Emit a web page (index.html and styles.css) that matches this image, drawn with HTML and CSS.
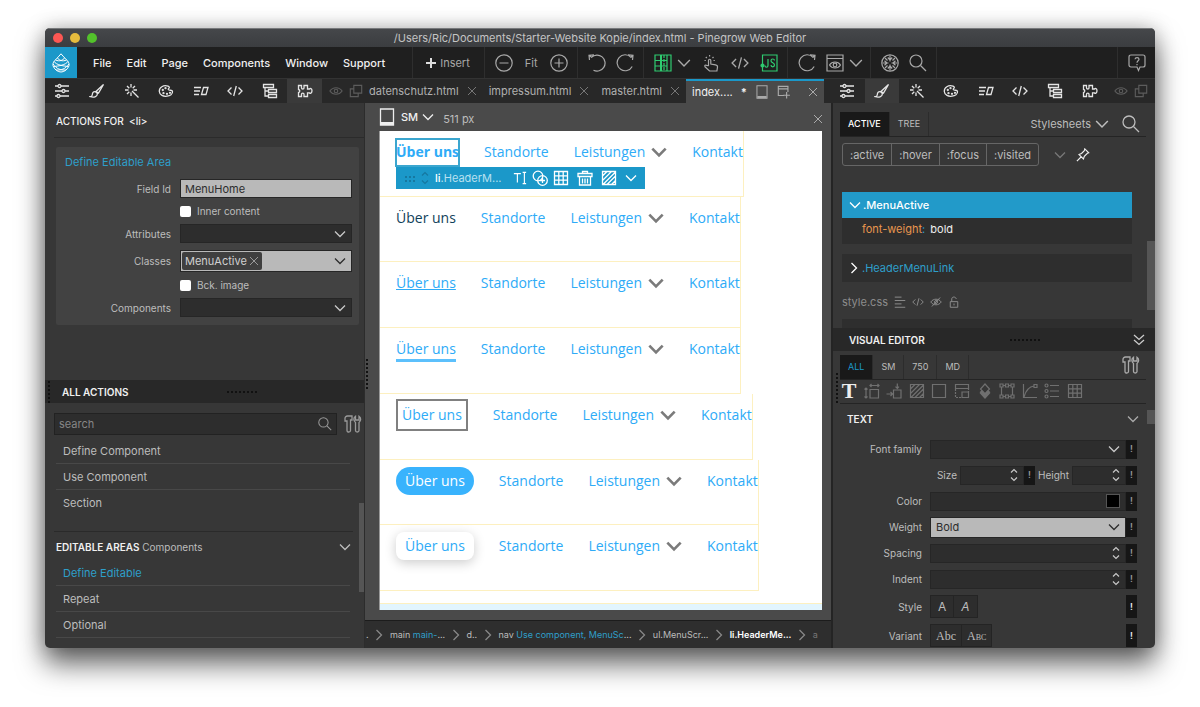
FILE: index.html
```html
<!DOCTYPE html>
<html lang="en">
<head>
  <meta charset="UTF-8">
  <meta name="viewport" content="width=device-width, initial-scale=1.0">
  <title>Pinegrow Web Editor</title>
  <link rel="stylesheet" href="styles.css">
</head>
<body>
  <!-- icon set -->
  <svg class="sprite" aria-hidden="true">
    <symbol id="chev" viewBox="0 0 12 12"><path d="M1 3.500l5 5 5-5"/></symbol>
    <symbol id="chev-right" viewBox="0 0 12 12"><path d="M3.500 1l5 5-5 5"/></symbol>
    <symbol id="chev-double" viewBox="0 0 12 12"><path d="M1 1l5 4.500L11 1M1 6l5 4.500L11 6"/></symbol>
    <symbol id="spin" viewBox="0 0 8 14"><path d="M1 4.500l3-3 3 3M1 9.500l3 3 3-3"/></symbol>
    <symbol id="close" viewBox="0 0 10 10"><path d="M1 1l8 8M9 1l-8 8"/></symbol>
    <symbol id="logo" viewBox="0 0 20 20"><path d="M10 .8c2.500 3.200 5.600 5.600 7.400 8.400.9 1.500 1 3.200.1 4.600-1.400 3-4.500 5.200-7.500 5.200s-6.100-2.200-7.500-5.200c-.9-1.400-.8-3.100.1-4.600C4.400 6.400 7.500 4 10 .8zM6.500 5c1.500 2.300 5 3.800 9 2M13.500 5c-1.500 2.300-5 3.800-9 2M3 8.500c2.500 3.500 9 4.500 14.500 5M17 8.500c-2.500 3.500-9 4.500-14.500 5M2.200 11c3 5 8 6.500 12.800 6M17.800 11c-3 5-8 6.500-12.800 6"/></symbol>
    <symbol id="sliders" viewBox="0 0 16 16"><path d="M1 3h3M7 3h8M1 8h7M11 8h4M1 13h2M6 13h9"/><circle cx="5.500" cy="3" r="1.500"/><circle cx="9.500" cy="8" r="1.500"/><circle cx="4.500" cy="13" r="1.500"/></symbol>
    <symbol id="brush" viewBox="0 0 16 16"><path d="M14.500 1.500L9.500 10 7 8.500zM6.500 8.700c-2.500-.5-3 1.500-3.200 3-.1 1-.8 1.800-1.800 2 3 1 6.800.3 7-3.200z"/></symbol>
    <symbol id="wand" viewBox="0 0 16 16"><path d="M8 8l6.500 6.500M7 1v3.500M7 9.500V13M1 7h3.500M9.500 7H13M3 3l2.300 2.300M11 3L8.700 5.300M3 11l2.300-2.300"/></symbol>
    <symbol id="palette" viewBox="0 0 16 16"><path d="M10 3.200C5.500 1.600 1 4.500 1.300 8.500c.3 3.600 4.200 5.300 7.700 4.700 3-.4 5.800-2.200 5.500-4.800-.2-1.500-1.700-1-3-1.200-1.500-.2-1.700-1.200-.6-2 .8-.5.500-1.500-.9-2z"/><circle cx="4.800" cy="7" r=".5"/><circle cx="7.500" cy="5.200" r=".5"/><circle cx="5.500" cy="10.200" r=".5"/><circle cx="9" cy="10.800" r=".5"/><circle cx="12" cy="9.800" r=".5"/></symbol>
    <symbol id="text-skew" viewBox="0 0 16 16"><path d="M1 4.500h7M1 8h6M1 11.500h5M10.500 4.500H15l-2 7H8.500z"/></symbol>
    <symbol id="code" viewBox="0 0 16 16"><path d="M4.500 4.500L1 8l3.500 3.500M11.500 4.500L15 8l-3.500 3.500M9.300 3L6.700 13"/></symbol>
    <symbol id="tree" viewBox="0 0 16 16"><path d="M1.500 1.500h10v3h-10zM6.500 6.500h8v3h-8zM6.500 11.500h8v3h-8zM3 4.500V13h3.500M3 8h3.500"/></symbol>
    <symbol id="puzzle" viewBox="0 0 16 16"><path d="M1.500 2.500h3V5c0 1.300 2.500 1.300 2.500 0V2.500h3.500V6h2c.6-1 2.500-.6 2.500 1.800s-1.900 3-2.500 2h-2v3.700H7V11c0-1.300-2.500-1.300-2.500 0v2.500h-3V9.500C3.200 9.500 3.200 6.500 1.500 6.500z"/></symbol>
    <symbol id="eye" viewBox="0 0 16 16"><path d="M1 8c3.500-5 10.500-5 14 0-3.500 5-10.500 5-14 0z"/><circle cx="8" cy="8" r="2"/></symbol>
    <symbol id="eye-off" viewBox="0 0 16 16"><path d="M1 8c3.500-5 10.500-5 14 0-3.500 5-10.500 5-14 0zM2.500 14L13.500 2"/><circle cx="8" cy="8" r="2"/></symbol>
    <symbol id="layers" viewBox="0 0 16 16"><path d="M5.500 1.500h9v9h-9zM5.500 5.500h-4v9h9v-4"/></symbol>
    <symbol id="plus" viewBox="0 0 12 12"><path d="M6 1v10M1 6h10"/></symbol>
    <symbol id="zoom-out" viewBox="0 0 18 18"><circle cx="9" cy="9" r="8.200"/><path d="M4.500 9h9"/></symbol>
    <symbol id="zoom-in" viewBox="0 0 18 18"><circle cx="9" cy="9" r="8.200"/><path d="M4.500 9h9M9 4.500v9"/></symbol>
    <symbol id="undo" viewBox="0 0 18 18"><path d="M6 .8L1 1.200 1.500 6M1.500 1.500L3.500 3.300A8 8 0 1 1 5.500 16.200"/></symbol>
    <symbol id="redo" viewBox="0 0 18 18"><path d="M12 .8l5 .4-.5 4.800M16.500 1.500L15 3.300A8 8 0 1 0 16.200 12.500"/></symbol>
    <symbol id="layout" viewBox="0 0 18 18"><path d="M1 1h16v16H1zM13 1v16M1 6.500h12M1 12h12"/><path d="M7 1v16" stroke-width="2"/><path d="M10 1v16" stroke-dasharray="3 1"/></symbol>
    <symbol id="hand" viewBox="0 0 18 18"><path d="M6.500 11.500V6.500c0-1.700 2.300-1.700 2.300 0V10l4.700.8c1.500.3 2.200 1 2 2.400l-.6 3.800H7.500L3 12.800c-.8-1.300.5-2.200 1.500-1.500zM2.500 6.500h1.300M11.500 6.500h1.300M3.800 3l1 1M11.500 3l-1 1M7.600 1v1.400"/></symbol>
    <symbol id="js" viewBox="0 0 18 18"><path d="M2.500 1H17v16H2.500zM8 5v6.500c0 2.300-3 2.300-3 0M14.500 6.500c0-2-3.500-2-3.500.2 0 2.300 3.500 2 3.500 4.400 0 2.300-3.500 2.300-3.500 0"/><circle cx="2.500" cy="11.500" r="1.500" fill="currentColor"/></symbol>
    <symbol id="browser" viewBox="0 0 18 18"><path d="M1 1h16v16H1zM1 4.500h16M3.500 11c2.500-4 8.500-4 11 0-2.500 4-8.500 4-11 0z"/><circle cx="9" cy="11" r="1.800"/></symbol>
    <symbol id="wheel" viewBox="0 0 18 18"><circle cx="9" cy="9" r="8.200"/><path d="M9 7.500V1.500M6.800 3.500L9 6l2.200-2.500M9 10.500v6M6.800 14.500L9 12l2.200 2.500M7.500 9h-6M3.500 6.800L6 9l-2.500 2.200M10.500 9h6M14.500 6.800L12 9l2.500 2.200M4 4l2.500 2.500M14 4l-2.500 2.500M4 14l2.500-2.500M14 14l-2.500-2.500"/></symbol>
    <symbol id="search" viewBox="0 0 18 18"><circle cx="7" cy="7" r="6"/><path d="M11.500 11.500L17 17"/></symbol>
    <symbol id="help" viewBox="0 0 18 18"><path d="M3 1h12c1.300 0 2 .8 2 2v8c0 1.300-.8 2-2 2h-3l-1.500 3.500L9 13H3c-1.300 0-2-.8-2-2V3c0-1.300.8-2 2-2zM7 5.200c.2-2.200 4-2.200 4 0C11 6.800 9 6.800 9 8.700M9 10v1.200"/></symbol>
    <symbol id="tablet" viewBox="0 0 16 18"><path d="M1.500 1h13v16h-13z"/><path d="M2 15.500h12" stroke-width="3"/></symbol>
    <symbol id="page-plus" viewBox="0 0 16 16"><path d="M8 12H1.500V1.500h11V8M1.500 4.500h11M11 8v7.500M7.200 11.700h7.600"/></symbol>
    <symbol id="tools" viewBox="0 0 18 18"><path d="M1 6V3.500C1 2 2 1 3.500 1H8v4H6.500v10.500c0 2-3.500 2-3.500 0V6zM11.500 1.200c-2.200 1.500-2.200 4.800 0 6.300v8c0 2 3.500 2 3.500 0v-8c2.200-1.500 2.200-4.800 0-6.300V5h-3.500z"/></symbol>
    <symbol id="text-cursor" viewBox="0 0 16 16"><path d="M1 3h8M5 3v10M11 1.500h4M11 14.500h4M13 1.500v13"/></symbol>
    <symbol id="duplicate" viewBox="0 0 16 16"><circle cx="6" cy="6" r="4.800"/><circle cx="10.500" cy="10.500" r="4.800"/><path d="M10.500 8v5M8 10.500h5"/></symbol>
    <symbol id="grid" viewBox="0 0 16 16"><path d="M1.500 1.500h13v13h-13zM5.800 1.500v13M10.200 1.500v13M1.500 5.800h13M1.500 10.200h13"/></symbol>
    <symbol id="trash" viewBox="0 0 16 16"><path d="M1 3.500h14v3H1zM5.500 3.500v-2h5v2M2.500 6.500V15h11V6.500M5.500 8.500v5M8 8.500v5M10.500 8.500v5"/></symbol>
    <symbol id="hatch" viewBox="0 0 16 16"><path d="M1.500 1.500h13v13h-13zM1.500 6L6 1.500M1.500 10.500l9-9M2 14.500l12.500-12.500M6 14.500l8.500-8.500M10.500 14.500l4-4"/></symbol>
    <symbol id="pin" viewBox="0 0 16 16"><path d="M1 15l5-5M3.500 7.500l5 5 1-3 3.500-3.500 1.500-.5L10 1 9.500 3 6.300 6.300z"/></symbol>
    <symbol id="lines" viewBox="0 0 16 16"><path d="M1 1.500h9M1 6h14M1 10.500h9M1 15h14"/></symbol>
    <symbol id="lock" viewBox="0 0 16 16"><path d="M3 7.500h10V15H3zM5 7.500V4c0-3.500 5.500-3.500 6 0M8 10v2.500"/></symbol>
    <symbol id="size" viewBox="0 0 16 16"><path d="M6 6.500h8.500v8.500H6zM2 5v10M.5 6.500L2 5l1.500 1.500M.5 13.500L2 15l1.500-1.500M6 2.500h9M7.500 1L6 2.500 7.500 4M13.500 1L15 2.500 13.500 4"/></symbol>
    <symbol id="margin" viewBox="0 0 16 16"><path d="M7.500 7h7.500v8H7.500zM.5 11h6M4.500 9l2 2-2 2M11.300.5v5M9.500 3.700l1.800 1.800L13 3.700"/></symbol>
    <symbol id="box" viewBox="0 0 16 16"><path d="M1.500 1.500h13v13h-13z"/></symbol>
    <symbol id="position" viewBox="0 0 16 16"><path d="M1.500 1.500h13v4h-13zM8 9h6.500v5.500H8z"/><path d="M1.500 6v8.500H8M14.500 5v4" stroke-dasharray="2 1"/></symbol>
    <symbol id="effects" viewBox="0 0 16 16"><path d="M8 1l4.500 5L8 11 3.500 6zM3 9.500l5 5.500 5-5.500"/><path d="M3.500 9L8 14l4.500-5L11 8l-3 3-3-3z" fill="currentColor"/></symbol>
    <symbol id="transform" viewBox="0 0 16 16"><path d="M1 1h3v3H1zM6.500 1h3v3h-3zM12 1h3v3h-3zM1 12h3v3H1zM6.500 12h3v3h-3zM12 12h3v3h-3zM2.500 4v8M13.500 4v8M4 2.500h2.500M9.500 2.500H12M4 13.500h2.500M9.500 13.500H12"/></symbol>
    <symbol id="curve" viewBox="0 0 16 16"><path d="M1.500 1v13.500H15M2 14C4 7 7 3.500 12 3M12 1.500h3v3h-3z"/></symbol>
    <symbol id="list" viewBox="0 0 16 16"><circle cx="2.500" cy="2.500" r="1.500"/><circle cx="2.500" cy="8" r="1.500"/><circle cx="2.500" cy="13.500" r="1.500"/><path d="M6 2.500h9M6 8h9M6 13.500h9"/></symbol>
  </svg>

  <div class="window">
    <header class="titlebar">
      <div class="lights"><i class="light red"></i><i class="light yellow"></i><i class="light green"></i></div>
      <h1 class="title">/Users/Ric/Documents/Starter-Website Kopie/index.html - Pinegrow Web Editor</h1>
    </header>

    <div class="menubar">
      <button class="logo" aria-label="Pinegrow"><svg class="i20"><use href="#logo"/></svg></button>
      <nav class="menu">
        <button>File</button>
        <button>Edit</button>
        <button>Page</button>
        <button>Components</button>
        <button>Window</button>
        <button>Support</button>
      </nav>
      <div class="tools insert"><button><svg class="i12"><use href="#plus"/></svg>Insert</button></div>
      <div class="tools zoom">
        <button aria-label="Zoom out"><svg class="i18"><use href="#zoom-out"/></svg></button>
        <button>Fit</button>
        <button aria-label="Zoom in"><svg class="i18"><use href="#zoom-in"/></svg></button>
      </div>
      <div class="tools">
        <button aria-label="Undo"><svg class="i18"><use href="#undo"/></svg></button>
        <button aria-label="Redo"><svg class="i18"><use href="#redo"/></svg></button>
      </div>
      <div class="tools modes">
        <div class="pair">
          <button class="on" aria-label="Layout"><svg class="i18"><use href="#layout"/></svg></button>
          <button aria-label="Layout options"><svg class="i14"><use href="#chev"/></svg></button>
        </div>
        <button aria-label="Interactions"><svg class="i18"><use href="#hand"/></svg></button>
        <button aria-label="Code"><svg class="i18"><use href="#code"/></svg></button>
        <button class="on" aria-label="JavaScript"><svg class="i18"><use href="#js"/></svg></button>
      </div>
      <div class="tools preview">
        <button aria-label="Reload"><svg class="i18"><use href="#redo"/></svg></button>
        <div class="pair">
          <button aria-label="Preview"><svg class="i18"><use href="#browser"/></svg></button>
          <button aria-label="Preview options"><svg class="i14"><use href="#chev"/></svg></button>
        </div>
      </div>
      <div class="tools">
        <button aria-label="Focus"><svg class="i18"><use href="#wheel"/></svg></button>
        <button aria-label="Search"><svg class="i18"><use href="#search"/></svg></button>
      </div>
      <div class="tools rest"></div>
      <div class="tools"><button aria-label="Help"><svg class="i18"><use href="#help"/></svg></button></div>
    </div>

    <div class="tabrow">
      <div class="icon-tabs">
        <div class="tabs8">
          <button aria-label="Properties"><svg class="i16"><use href="#sliders"/></svg></button>
          <button aria-label="Style"><svg class="i16"><use href="#brush"/></svg></button>
          <button aria-label="Interactions"><svg class="i16"><use href="#wand"/></svg></button>
          <button aria-label="Colors"><svg class="i16"><use href="#palette"/></svg></button>
          <button aria-label="Library"><svg class="i16"><use href="#text-skew"/></svg></button>
          <button aria-label="Code"><svg class="i16"><use href="#code"/></svg></button>
          <button aria-label="Tree"><svg class="i16"><use href="#tree"/></svg></button>
          <button class="active" aria-label="Actions"><svg class="i16"><use href="#puzzle"/></svg></button>
        </div>
        <div class="dim">
          <svg class="i14"><use href="#eye"/></svg>
          <svg class="i14"><use href="#layers"/></svg>
        </div>
      </div>
      <div class="doc-tabs">
        <button class="doc">datenschutz.html<svg class="i10"><use href="#close"/></svg></button>
        <button class="doc">impressum.html<svg class="i10"><use href="#close"/></svg></button>
        <button class="doc">master.html<svg class="i10"><use href="#close"/></svg></button>
        <button class="doc current">index....<b>*</b>
          <svg class="i14"><use href="#tablet"/></svg><svg class="i14"><use href="#page-plus"/></svg><svg class="i10 last"><use href="#close"/></svg></button>
      </div>
      <div class="icon-tabs right">
        <div class="tabs8">
          <button aria-label="Properties"><svg class="i16"><use href="#sliders"/></svg></button>
          <button class="active" aria-label="Style"><svg class="i16"><use href="#brush"/></svg></button>
          <button aria-label="Interactions"><svg class="i16"><use href="#wand"/></svg></button>
          <button aria-label="Colors"><svg class="i16"><use href="#palette"/></svg></button>
          <button aria-label="Library"><svg class="i16"><use href="#text-skew"/></svg></button>
          <button aria-label="Code"><svg class="i16"><use href="#code"/></svg></button>
          <button aria-label="Tree"><svg class="i16"><use href="#tree"/></svg></button>
          <button aria-label="Actions"><svg class="i16"><use href="#puzzle"/></svg></button>
        </div>
        <div class="dim">
          <svg class="i14"><use href="#eye"/></svg>
          <svg class="i14"><use href="#layers"/></svg>
        </div>
      </div>
    </div>

    <main class="main">
      <!-- left panel -->
      <aside class="left">
        <section class="actions-for">
          <h2 class="for-title">ACTIONS FOR &nbsp;&lt;li&gt;</h2>
          <form class="card">
            <h3>Define Editable Area</h3>
            <div class="form-row"><label for="field-id">Field Id</label><input class="filled" id="field-id" type="text" value="MenuHome"></div>
            <div class="form-row check"><span></span><label><input type="checkbox">Inner content</label></div>
            <div class="form-row"><label for="attrs">Attributes</label>
              <div class="pick"><select id="attrs"><option></option></select><svg class="i12"><use href="#chev"/></svg></div></div>
            <div class="form-row tall"><label for="classes">Classes</label>
              <div class="pick filled"><span class="tag">MenuActive<svg class="i10"><use href="#close"/></svg></span><select id="classes"><option></option></select><svg class="i12"><use href="#chev"/></svg></div></div>
            <div class="form-row check"><span></span><label><input type="checkbox">Bck. image</label></div>
            <div class="form-row"><label for="comps">Components</label>
              <div class="pick"><select id="comps"><option></option></select><svg class="i12"><use href="#chev"/></svg></div></div>
          </form>
        </section>
        <section class="all-actions">
          <h2 class="bar">ALL ACTIONS<i class="grip"></i><i class="vgrip"></i></h2>
          <div class="search-row">
            <label class="search"><input type="text" placeholder="search" aria-label="search"><svg class="i14"><use href="#search"/></svg></label>
            <svg class="i18"><use href="#tools"/></svg>
          </div>
          <ul class="actions">
            <li><button>Define Component</button></li>
            <li><button>Use Component</button></li>
            <li><button>Section</button></li>
          </ul>
          <h3 class="group"><span><b>EDITABLE AREAS</b> Components</span><svg class="i12"><use href="#chev"/></svg></h3>
          <ul class="actions second">
            <li><button class="blue">Define Editable</button></li>
            <li><button>Repeat</button></li>
            <li><button>Optional</button></li>
          </ul>
          <i class="scroll"></i>
        </section>
      </aside>

      <!-- page view -->
      <section class="center">
        <div class="view-head">
          <svg class="i18"><use href="#tablet"/></svg>
          <button>SM<svg class="i12"><use href="#chev"/></svg></button>
          <span>511 px</span>
          <button class="view-close" aria-label="Close"><svg class="i10"><use href="#close"/></svg></button>
        </div>
        <i class="vgrip mid"></i>
        <div class="canvas">
          <div class="rows">
            <nav class="site-nav">
              <a class="bold" href="#">Über uns</a><a href="#">Standorte</a><a href="#">Leistungen<svg class="drop"><use href="#chev"/></svg></a><a href="#">Kontakt</a>
              <div class="select-bar">
                <i class="dots"></i><svg class="updown"><use href="#spin"/></svg>
                <span class="sel-name"><b>li</b>.HeaderM...</span>
                <svg class="i14"><use href="#text-cursor"/></svg>
                <svg class="i16"><use href="#duplicate"/></svg>
                <svg class="i16"><use href="#grid"/></svg>
                <svg class="i16 gap"><use href="#trash"/></svg>
                <svg class="i16 gap"><use href="#hatch"/></svg>
                <svg class="i12 gap"><use href="#chev"/></svg>
              </div>
            </nav>
            <nav class="site-nav"><a class="dark" href="#">Über uns</a><a href="#">Standorte</a><a href="#">Leistungen<svg class="drop"><use href="#chev"/></svg></a><a href="#">Kontakt</a></nav>
            <nav class="site-nav"><a class="under" href="#">Über uns</a><a href="#">Standorte</a><a href="#">Leistungen<svg class="drop"><use href="#chev"/></svg></a><a href="#">Kontakt</a></nav>
            <nav class="site-nav"><a class="thick" href="#">Über uns</a><a href="#">Standorte</a><a href="#">Leistungen<svg class="drop"><use href="#chev"/></svg></a><a href="#">Kontakt</a></nav>
            <nav class="site-nav"><a class="boxed" href="#">Über uns</a><a href="#">Standorte</a><a href="#">Leistungen<svg class="drop"><use href="#chev"/></svg></a><a href="#">Kontakt</a></nav>
            <nav class="site-nav"><a class="pill" href="#">Über uns</a><a href="#">Standorte</a><a href="#">Leistungen<svg class="drop"><use href="#chev"/></svg></a><a href="#">Kontakt</a></nav>
            <nav class="site-nav"><a class="raised" href="#">Über uns</a><a href="#">Standorte</a><a href="#">Leistungen<svg class="drop"><use href="#chev"/></svg></a><a href="#">Kontakt</a></nav>
          </div>
          <div class="next-section"></div>
        </div>
        <div class="crumbs">
          <span>.</span><svg class="i12"><use href="#chev-right"/></svg>
          <span>main <em>main-</em>...</span><svg class="i12"><use href="#chev-right"/></svg>
          <span>d..</span><svg class="i12"><use href="#chev-right"/></svg>
          <span>nav <em>Use component, MenuSc</em>...</span><svg class="i12"><use href="#chev-right"/></svg>
          <span>ul.MenuScr...</span><svg class="i12"><use href="#chev-right"/></svg>
          <span class="crumb-on">li.HeaderMe...</span><svg class="i12"><use href="#chev-right"/></svg>
          <span class="faint">a</span>
        </div>
      </section>

      <!-- right panel -->
      <aside class="right-panel">
        <section class="styles">
          <div class="tabs top-tabs">
            <button class="sel white">ACTIVE</button>
            <button>TREE</button>
            <button class="sheets">Stylesheets<svg class="i14"><use href="#chev"/></svg></button>
            <svg class="i18"><use href="#search"/></svg>
          </div>
          <div class="states">
            <div class="state-group">
              <button>:active</button><button>:hover</button><button>:focus</button><button>:visited</button>
            </div>
            <svg class="i12 faint"><use href="#chev"/></svg>
            <svg class="i14 pin"><use href="#pin"/></svg>
          </div>
          <div class="rule">
            <div class="rule-head"><svg class="i12"><use href="#chev"/></svg>.MenuActive</div>
            <div class="rule-body"><span>font-weight</span><em>:</em> bold</div>
          </div>
          <div class="rule closed"><svg class="i12"><use href="#chev-right"/></svg><span>.HeaderMenuLink</span></div>
          <div class="file">style.css
            <svg class="i12"><use href="#lines"/></svg><svg class="i12"><use href="#code"/></svg><svg class="i12"><use href="#eye-off"/></svg><svg class="i12"><use href="#lock"/></svg>
          </div>
          <div class="rule next"></div>
          <i class="scroll"></i>
        </section>
        <section class="visual">
          <h2 class="bar">VISUAL EDITOR<i class="grip"></i><svg class="i12"><use href="#chev-double"/></svg></h2>
          <i class="vgrip"></i>
          <div class="tabs sizes">
            <button class="sel">ALL</button><button>SM</button><button>750</button><button>MD</button>
            <svg class="i18 wrench"><use href="#tools"/></svg>
          </div>
          <div class="props">
            <button class="t" aria-label="Text">T</button>
            <button aria-label="Size"><svg class="i16"><use href="#size"/></svg></button>
            <button aria-label="Spacing"><svg class="i16"><use href="#margin"/></svg></button>
            <button aria-label="Background"><svg class="i16"><use href="#hatch"/></svg></button>
            <button aria-label="Border"><svg class="i16"><use href="#box"/></svg></button>
            <button aria-label="Position"><svg class="i16"><use href="#position"/></svg></button>
            <button aria-label="Effects"><svg class="i16"><use href="#effects"/></svg></button>
            <button aria-label="Transform"><svg class="i16"><use href="#transform"/></svg></button>
            <button aria-label="Transition"><svg class="i16"><use href="#curve"/></svg></button>
            <button aria-label="List"><svg class="i16"><use href="#list"/></svg></button>
            <button aria-label="Grid"><svg class="i16"><use href="#grid"/></svg></button>
          </div>
          <h3 class="text-title">TEXT<svg class="i12"><use href="#chev"/></svg></h3>
          <i class="scroll"></i>
          <form class="text-form">
            <div class="prop"><label for="family">Font family</label>
              <div class="pick"><select id="family"><option></option></select><svg class="i12"><use href="#chev"/></svg></div><button type="button" class="imp">!</button></div>
            <div class="prop double"><label for="size-in">Size</label>
              <div class="pick"><input id="size-in" type="text"><svg class="updown"><use href="#spin"/></svg></div><button type="button" class="imp">!</button>
              <label for="height-in">Height</label>
              <div class="pick h"><input id="height-in" type="text"><svg class="updown"><use href="#spin"/></svg></div><button type="button" class="imp">!</button></div>
            <div class="prop"><label for="color-in">Color</label>
              <div class="pick"><input id="color-in" type="text"><input class="swatch" type="color" value="#000000" aria-label="Pick color"></div><button type="button" class="imp">!</button></div>
            <div class="prop weight"><label for="weight">Weight</label>
              <div class="pick filled"><select id="weight"><option>Bold</option></select><svg class="i12"><use href="#chev"/></svg></div><button type="button" class="imp">!</button></div>
            <div class="prop"><label for="spacing">Spacing</label>
              <div class="pick"><input id="spacing" type="text"><svg class="updown"><use href="#spin"/></svg></div><button type="button" class="imp">!</button></div>
            <div class="prop"><label for="indent">Indent</label>
              <div class="pick"><input id="indent" type="text"><svg class="updown"><use href="#spin"/></svg></div><button type="button" class="imp">!</button></div>
            <div class="prop big"><span class="lbl">Style</span>
              <div class="choices"><button type="button">A</button><button type="button" class="ital">A</button></div><button type="button" class="imp">!</button></div>
            <div class="prop big"><span class="lbl">Variant</span>
              <div class="choices serif"><button type="button">Abc</button><button type="button" class="caps">Abc</button></div><button type="button" class="imp">!</button></div>
          </form>
        </section>
      </aside>
    </main>
  </div>
</body>
</html>
```

FILE: styles.css
```css
* {
  box-sizing: border-box;
}
body {
  margin: 0;
  height: 100vh;
  padding: 28px 45px 59px;
  background: #fff;
  font-family: Inter, "Liberation Sans", sans-serif;
  font-size: 11px;
  line-height: 16px;
  color: #bdbdbd;
  overflow: hidden;
}
h1, h2, h3, ul {
  margin: 0;
  padding: 0;
  font-size: 11px;
  font-weight: 600;
}
ul {
  list-style: none;
  font-weight: 400;
}
button, input, select {
  font: inherit;
  color: inherit;
  background: none;
  border: 0;
  border-radius: 0;
  margin: 0;
  padding: 0;
  min-width: 0;
}
button {
  display: flex;
  align-items: center;
  white-space: nowrap;
  cursor: pointer;
}
select {
  appearance: none;
}
em {
  font-style: normal;
}

/* icons */
svg {
  fill: none;
  stroke: currentColor;
  stroke-width: 1.3;
  flex: none;
  display: block;
}
.sprite { position: absolute; width: 0; height: 0; }
.i10 { width: 10px; height: 10px; stroke-width: 1; }
.i12 { width: 12px; height: 12px; stroke-width: 1.3; }
.i14 { width: 14px; height: 14px; }
.i16 { width: 16px; height: 16px; }
.i18 { width: 18px; height: 18px; }
.i20 { width: 20px; height: 20px; stroke-width: 1; }
.updown { width: 8px; height: 14px; stroke-width: 1.2; }

/* window */
.window {
  height: 100%;
  display: flex;
  flex-direction: column;
  background: #373737;
  border-radius: 5px;
  overflow: hidden;
  box-shadow: 0 16px 28px rgba(0, 0, 0, .6), 0 0 20px rgba(0, 0, 0, .25);
}
.titlebar {
  flex: 0 0 19px;
  display: grid;
  grid-template-columns: 60px 1fr 60px;
  align-items: center;
  padding: 0 8px;
  background: linear-gradient(#45474a, #3b3d40);
  border-top: 1px solid #77797b;
}
.lights { display: flex; gap: 7px; }
.light { width: 10px; height: 10px; border-radius: 50%; }
.red { background: #fc5753; }
.yellow { background: #e5bb3d; }
.green { background: #53c22b; }
.title { text-align: center; font-weight: 400; color: #c4c4c4; white-space: nowrap; }

/* menu */
.menubar {
  flex: 0 0 32px;
  display: flex;
  background: #1f1f1f;
  border-bottom: 1px solid #333;
}
.logo {
  width: 32px;
  justify-content: center;
  background: #1b98c9;
  color: #fff;
}
.menu {
  display: flex;
  gap: 15px;
  padding: 0 27px 0 16px;
  color: #f0f0f0;
  font-weight: 500;
}
.tools {
  display: flex;
  align-items: center;
  gap: 10px;
  padding: 0 9px 0 10px;
  border-left: 1px solid #2e2e2e;
  color: #a8a8a8;
}
.tools svg { stroke-width: 1.2; }
.tools.insert { padding: 0 14px 0 12px; }
.insert button { gap: 3px; }
.insert svg { stroke-width: 2; color: #ddd; }
.zoom button:nth-child(2) { padding: 0 2px; }
.tools.modes { gap: 11px; }
.pair { display: flex; gap: 5px; }
.preview { padding-right: 7px; }
.tools.rest { flex: 1; }
.tools .on { color: #2fcc71; }

/* tab row */
.tabrow {
  flex: 0 0 24px;
  display: flex;
  background: #282828;
}
.icon-tabs {
  flex: 0 0 320px;
  display: flex;
  color: #e4e4e4;
}
.icon-tabs.right { flex-basis: 331px; padding-left: 6px; }
.tabs8 {
  flex: 0 0 277px;
  display: grid;
  grid-template-columns: repeat(8, 1fr);
}
.tabs8 button { justify-content: center; }
.tabs8 .active { background: #3a3a3a; }
.dim {
  flex: 1;
  display: flex;
  align-items: center;
  gap: 6px;
  padding-left: 7px;
  color: #5c5c5c;
}
.doc-tabs { flex: 1; display: flex; min-width: 0; }
.doc {
  padding: 0 6px;
  gap: 8px;
  color: #b0b0b0;
}
.doc:first-child { padding-left: 4px; }
.doc svg { color: #777; }
.doc.current {
  flex: 1;
  background: #4a4a4a;
  border-top: 2px solid #1b98c9;
  color: #f0f0f0;
}
.doc.current svg { color: #aaa; }
.doc .last { margin-left: auto; }

.main { flex: 1; display: flex; min-height: 0; }

/* left */
.left {
  flex: 0 0 320px;
  display: flex;
  flex-direction: column;
  border-right: 1px solid #2c2c2c;
}
.actions-for { flex: 0 0 277px; }
.for-title {
  margin-left: 9px;
  padding: 10px 0 8px 2px;
  font-size: 10px;
  font-weight: 500;
  color: #f0f0f0;
  border-bottom: 1px solid #2b2b2b;
}
.card {
  margin: 9px 5px 0 11px;
  padding: 7px 7px 8px 9px;
  background: #424242;
  border-radius: 2px;
}
.card h3 { font-weight: 400; color: #2e9fca; margin-bottom: 9px; }
.form-row {
  display: grid;
  grid-template-columns: 106px 1fr;
  gap: 9px;
  align-items: center;
  margin-bottom: 5px;
  font-size: 10px;
}
.form-row > label { text-align: right; }
.form-row > input, .pick {
  height: 19px;
  background: #2d2d2d;
  border: 1px solid #262626;
}
.form-row > input { width: 100%; padding: 0 4px; font-size: 11px; }
.form-row > .filled, .pick.filled { background: #b9b9b9; color: #2d2d2d; }
.check label { display: flex; align-items: center; gap: 6px; }
.check input {
  appearance: none;
  width: 11px;
  height: 11px;
  background: #fff;
  border-radius: 2px;
}
.pick { display: flex; align-items: center; padding-right: 5px; color: #c8c8c8; }
.pick select, .pick input:not(.swatch) { flex: 1; width: 20px; height: 100%; }
.tall { margin-top: 7px; }
.tall .pick { height: 22px; }
.card .form-row:last-child { margin-bottom: 0; }
.tag {
  display: flex;
  align-items: center;
  gap: 2px;
  height: 18px;
  margin-left: 1px;
  padding: 0 3px;
  background: #3f3f3f;
  color: #d0d0d0;
  font-size: 11px;
  border-radius: 2px;
}
.tag svg { color: #999; }
.bar {
  height: 23px;
  display: flex;
  align-items: center;
  position: relative;
  padding: 0 17px;
  background: #282828;
  color: #f0f0f0;
  font-size: 10px;
}
.grip {
  position: absolute;
  left: 57%;
  width: 31px;
  height: 2px;
  background: repeating-linear-gradient(90deg, #111 0 2px, transparent 2px 4px);
}
.vgrip {
  position: absolute;
  left: 3px;
  bottom: 0;
  width: 2px;
  height: 30px;
  background: repeating-linear-gradient(#111 0 2px, transparent 2px 4px);
}
.all-actions { flex: 1; min-height: 0; position: relative; overflow: hidden; }
.search-row {
  display: flex;
  align-items: center;
  gap: 7px;
  padding: 10px 2px 3px 9px;
  color: #9a9a9a;
}
.search {
  flex: 1;
  display: flex;
  align-items: center;
  height: 22px;
  padding: 0 4px;
  background: #2d2d2d;
  border: 1px solid #222;
}
.search input { flex: 1; }
.search input::placeholder { color: #868686; opacity: 1; }
.actions { margin: 0 14px 0 11px; }
.actions li { height: 26px; border-bottom: 1px solid #484848; }
.actions li button { height: 25px; width: 100%; padding-left: 7px; }
.actions:not(.second) li:last-child { border: 0; }
.actions .blue { color: #2e9fca; }
.group {
  display: flex;
  justify-content: space-between;
  align-items: center;
  height: 29px;
  margin: 15px 11px 0 9px;
  padding: 2px 2px 0;
  border-top: 1px solid #2a2a2a;
  font-size: 10px;
  font-weight: 400;
}
.group b { color: #f0f0f0; font-weight: 600; }
.scroll {
  position: absolute;
  right: 0;
  top: 123px;
  width: 5px;
  height: 89px;
  background: #555;
}

/* center */
.center {
  flex: 1;
  min-width: 0;
  display: flex;
  flex-direction: column;
  position: relative;
  background: #4a4a4a;
}
.vgrip.mid { top: 256px; left: 1px; bottom: auto; }
.view-head {
  flex: 0 0 28px;
  display: flex;
  align-items: center;
  gap: 5px;
  padding: 0 8px 0 13px;
}
.view-head svg:first-child { color: #eee; }
.view-head button { gap: 4px; color: #f0f0f0; font-weight: 500; }
.view-head span { padding: 3px 0 0 4px; }
.view-head .view-close { margin-left: auto; padding-top: 4px; }
.view-head .view-close svg { color: #aaa; }
.canvas {
  flex: 1;
  display: flex;
  flex-direction: column;
  margin: 0 9px 10px 14px;
  background: #fff;
  border-left: 1px solid #999;
  font-family: "Open Sans", "Noto Sans", sans-serif;
  font-size: 14px;
  line-height: 20px;
}
.rows {
  flex: 1;
  display: grid;
  grid-template-rows: repeat(7, 1fr);
  justify-items: start;
}
.site-nav {
  position: relative;
  display: flex;
  align-items: flex-start;
  gap: 25px;
  padding: 11px 0 0 16px;
  border: solid #fdf0c0;
  border-width: 0 1px 1px 0;
}
.site-nav a {
  display: flex;
  align-items: center;
  gap: 6px;
  color: #2eabf7;
  text-decoration: none;
  white-space: nowrap;
}
.drop { width: 16px; height: 16px; color: #7b7b7b; stroke-width: 2; }
.site-nav .bold { font-weight: 700; outline: 2px solid #3ba6cf; outline-offset: -1px; margin-top: -3px; padding: 3px 0 4px; }
.site-nav .dark { color: #10415a; }
.site-nav .under { text-decoration: underline; }
.site-nav .thick { border-bottom: 3px solid #5cc0fc; }
.site-nav .boxed { border: 2px solid #808080; padding: 4px; margin-top: -6px; }
.site-nav .pill {
  margin-top: -4px;
  padding: 4px 9px;
  border-radius: 14px;
  background: #39b3fd;
  color: #fff;
}
.site-nav .raised {
  margin-top: -4px;
  padding: 4px 9px;
  border-radius: 8px;
  background: #fff;
  box-shadow: 0 3px 12px rgba(0, 0, 0, .2);
}
.select-bar {
  position: absolute;
  left: 16px;
  top: 36px;
  width: 249px;
  height: 22px;
  display: flex;
  align-items: center;
  gap: 5px;
  padding: 0 8px;
  background: #1b98c9;
  color: #fff;
  font-family: Inter, "Liberation Sans", sans-serif;
  font-size: 11px;
}
.select-bar .gap { margin-left: 3px; }
.select-bar .updown { color: #1678a0; width: 10px; }
.dots {
  width: 11px;
  height: 7px;
  background: radial-gradient(circle, #1678a0 1px, transparent 1px) 0 0 / 4px 4px;
}
.sel-name { flex: 1; color: #b8e0f0; white-space: nowrap; }
.sel-name b { color: #fff; font-weight: 500; }
.next-section {
  height: 7px;
  margin-top: 12px;
  background: #e2f5fe;
  border-top: 1px solid #fdf0c0;
}
.crumbs {
  flex: 0 0 28px;
  display: flex;
  align-items: center;
  justify-content: space-between;
  padding: 0 13px 0 1px;
  background: #2e2e2e;
  border-top: 1px solid #1c1c1c;
  font-size: 9px;
  white-space: nowrap;
}
.crumbs svg { color: #888; }
.crumbs em { color: #2e9fca; }
.crumb-on { color: #fff; font-weight: 600; }
.faint { color: #777; }

/* right */
.right-panel {
  flex: 0 0 324px;
  display: flex;
  flex-direction: column;
  border-left: 2px solid #242424;
}
.styles { flex: 0 0 225px; position: relative; padding: 9px 9px 0 7px; overflow: hidden; }
.styles .scroll { top: 138px; width: 8px; height: 69px; }
.tabs {
  display: flex;
  align-items: center;
  height: 25px;
  border-bottom: 1px solid #242424;
}
.tabs button {
  height: 24px;
  padding: 0 8px;
  border-right: 1px solid #2c2c2c;
  font-size: 9px;
}
.tabs .sel { background: #191919; color: #1b98c9; }
.tabs .white { color: #fff; font-weight: 500; }
.tabs .sheets { margin-left: auto; gap: 4px; padding: 0 13px 0 0; border: 0; font-size: 11px; }
.top-tabs > svg { margin-right: 6px; }
.states {
  display: flex;
  align-items: center;
  gap: 10px;
  margin: 6px 0 26px 2px;
}
.state-group {
  display: flex;
  margin-right: 5px;
  border: 1px solid #666;
  border-radius: 3px;
}
.state-group button { height: 21px; padding: 0 7px; }
.state-group button + button { border-left: 1px solid #666; }
.pin { color: #eee; }
.rule { margin: 0 14px 10px 2px; background: #2e2e2e; }
.rule-head {
  display: flex;
  align-items: center;
  gap: 2px;
  height: 26px;
  padding-left: 7px;
  background: #229ac9;
  color: #fff;
  font-weight: 500;
}
.rule-body { height: 26px; padding: 3px 0 0 20px; color: #eee; }
.rule-body span { color: #e8964e; }
.rule-body em { color: #2e9fca; margin-right: 2px; }
.closed {
  display: flex;
  align-items: center;
  gap: 2px;
  height: 28px;
  margin-bottom: 12px;
  padding-left: 6px;
  color: #fff;
}
.closed span { color: #2e9fca; }
.file {
  display: flex;
  align-items: center;
  gap: 6px;
  margin: 0 2px 9px;
  color: #8c8c8c;
}
.rule.next { height: 20px; margin-bottom: 0; }
.visual { flex: 1; min-height: 0; position: relative; overflow: hidden; }
.visual .bar { padding: 0 10px 0 16px; }
.visual .bar svg { margin-left: auto; color: #ccc; }
.visual .grip { left: 55%; }
.visual > .vgrip { top: 45px; bottom: auto; }
.visual > .scroll { top: 82px; width: 8px; height: 14px; }
.sizes { margin: 4px 9px 0 7px; }
.wrench { margin: 0 6px 4px auto; color: #aaa; }
.props {
  display: flex;
  justify-content: space-between;
  height: 24px;
  margin: 0 9px 0 7px;
  padding: 0 63px 2px 1px;
  border-bottom: 1px solid #242424;
  color: #707070;
}
.props button { width: 16px; justify-content: center; }
.props svg { stroke-width: 1.2; }
.props .t { font-family: "Liberation Serif", serif; font-size: 22px; font-weight: 700; color: #eee; }
.text-title {
  display: flex;
  justify-content: space-between;
  align-items: center;
  height: 30px;
  padding: 0 16px 0 14px;
  font-size: 10px;
  color: #f0f0f0;
}
.text-title svg { color: #aaa; }
.text-form { padding: 2px 18px 0 7px; }
.prop {
  display: flex;
  align-items: center;
  height: 26px;
  font-size: 10px;
}
.prop > label, .lbl { width: 82px; margin-right: 8px; text-align: right; }
.prop .pick { flex: 1; min-width: 0; }
.weight .pick { height: 21px; padding-left: 2px; font-size: 11px; }
.weight select { padding-left: 3px; }
.imp {
  width: 11px;
  height: 19px;
  justify-content: center;
  background: #161616;
  color: #999;
  font-size: 9px;
  font-weight: 600;
}
.prop.double > label { width: 117px; margin-right: 3px; }
.prop.double > .imp + label { width: 34px; margin-right: 3px; }
.prop.double .pick.h { flex: 0 0 54px; }
.swatch {
  appearance: none;
  width: 14px;
  height: 14px;
  border: 1px solid #555;
}
.swatch::-webkit-color-swatch-wrapper { padding: 0; }
.swatch::-webkit-color-swatch { border: 0; }
.prop.big { height: 29px; }
.choices { flex: 1; display: flex; font-size: 12px; }
.choices button {
  height: 23px;
  padding: 0 7px;
  background: #2d2d2d;
  border: 1px solid #242424;
}
.choices button + button { margin-left: -1px; }
.big .imp { height: 23px; color: #eee; }
.ital { font-style: italic; }
.choices.serif { font-family: "Liberation Serif", serif; }
.serif button { padding: 0 5px; }
.caps { font-variant: small-caps; }
```
